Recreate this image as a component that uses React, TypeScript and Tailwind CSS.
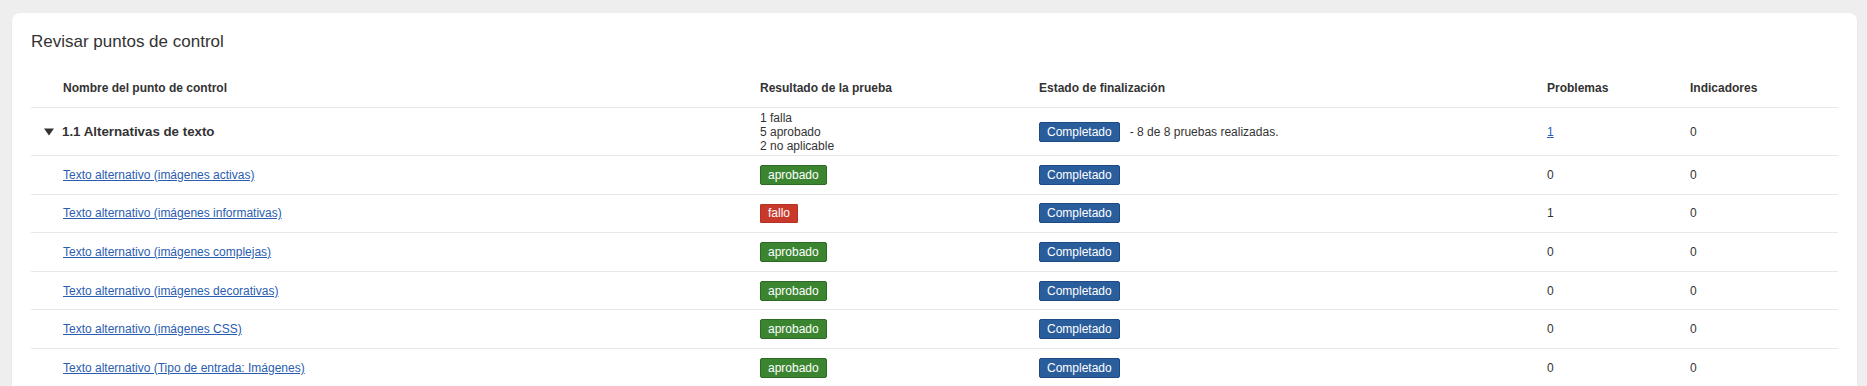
import React from 'react';

type Row = {
  name: string;
  result: 'aprobado' | 'fallo';
  problems: number;
  flags: number;
};

const ROWS: Row[] = [
  { name: 'Texto alternativo (imágenes activas)', result: 'aprobado', problems: 0, flags: 0 },
  { name: 'Texto alternativo (imágenes informativas)', result: 'fallo', problems: 1, flags: 0 },
  { name: 'Texto alternativo (imágenes complejas)', result: 'aprobado', problems: 0, flags: 0 },
  { name: 'Texto alternativo (imágenes decorativas)', result: 'aprobado', problems: 0, flags: 0 },
  { name: 'Texto alternativo (imágenes CSS)', result: 'aprobado', problems: 0, flags: 0 },
  { name: 'Texto alternativo (Tipo de entrada: Imágenes)', result: 'aprobado', problems: 0, flags: 0 },
];

const GRID = 'grid grid-cols-[729px_279px_508px_143px_1fr] items-center';

const Completed = () => (
  <span className="inline-flex h-[20px] items-center rounded-[2px] border border-[#1d4a82] bg-[#2a5d9c] px-[7px] text-[12px] text-white">
    Completado
  </span>
);

const ResultBadge = ({ result }: { result: Row['result'] }) =>
  result === 'aprobado' ? (
    <span className="inline-flex h-[20px] items-center rounded-[2px] border border-[#2c6a25] bg-[#3b8531] px-[7px] text-[12px] text-white">
      aprobado
    </span>
  ) : (
    <span className="inline-flex h-[19px] items-center rounded-[1px] border border-[#b23224] bg-[#c8392b] px-[7px] text-[12px] text-white">
      fallo
    </span>
  );

const App: React.FC = () => {
  return (
    <div className="min-h-screen bg-[#eeeeee] pt-[13px] pl-[12px] pr-[10px] font-['Liberation_Sans',Arial,sans-serif] text-[#333333]">
      <div className="rounded-[8px] bg-white px-[19px] pt-[19px] pb-4 shadow-[0_1px_2px_rgba(0,0,0,0.06)]">
        <h2 className="text-[17px] leading-[20px] font-normal text-[#333333]">Revisar puntos de control</h2>

        <div className="mt-[16px] text-[12px]">
          {/* header */}
          <div className={`${GRID} h-[40px] border-b border-[#e8e8e8] font-bold`}>
            <div className="pl-[32px]">Nombre del punto de control</div>
            <div>Resultado de la prueba</div>
            <div>Estado de finalización</div>
            <div>Problemas</div>
            <div>Indicadores</div>
          </div>

          {/* group row */}
          <div className={`${GRID} h-[48px] border-b border-[#e8e8e8]`}>
            <div className="flex items-center gap-[8px] pl-[13px] text-[13.3px] font-bold">
              <svg width="10" height="8" viewBox="0 0 10 8" className="shrink-0">
                <polygon points="0,0.5 10,0.5 5,7.5" fill="#333333" />
              </svg>
              1.1 Alternativas de texto
            </div>
            <div className="leading-[14px]">
              <div>1 falla</div>
              <div>5 aprobado</div>
              <div>2 no aplicable</div>
            </div>
            <div className="flex items-center gap-[10px]">
              <Completed />
              <span>- 8 de 8 pruebas realizadas.</span>
            </div>
            <div>
              <a href="#" className="text-[#2a5db0] underline">1</a>
            </div>
            <div>0</div>
          </div>

          {ROWS.map((row) => (
            <div key={row.name} className={`${GRID} h-[38.6px] border-b border-[#e8e8e8]`}>
              <div className="pl-[32px]">
                <a href="#" className="text-[#2a5db0] underline">{row.name}</a>
              </div>
              <div>
                <ResultBadge result={row.result} />
              </div>
              <div>
                <Completed />
              </div>
              <div>{row.problems}</div>
              <div>{row.flags}</div>
            </div>
          ))}
        </div>
      </div>
    </div>
  );
};

export default App;
